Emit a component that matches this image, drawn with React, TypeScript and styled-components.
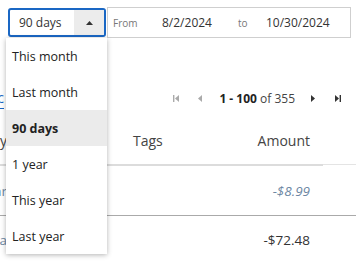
import React from "react";
import styled, { createGlobalStyle } from "styled-components";

const Global = createGlobalStyle`
  html, body { margin: 0; padding: 0; background: #fff; }
  body { font-family: "Open Sans", "Noto Sans", Arial, sans-serif; color: #333; width: 356px; height: 262px; overflow: hidden; }
`;

const Page = styled.div`
  position: relative;
  width: 356px;
  height: 262px;
  overflow: hidden;
`;

const Toolbar = styled.div`
  display: flex;
  align-items: center;
  padding: 7px 5px 0 8px;
`;

const SelectWrap = styled.div`
  position: relative;
  z-index: 2;
`;

const Select = styled.div`
  box-sizing: border-box;
  width: 98px;
  height: 29px;
  border: 2px solid #1a67c4;
  border-radius: 3px;
  display: flex;
  align-items: stretch;
  overflow: hidden;
`;

const SelectLabel = styled.span`
  flex: 1;
  display: flex;
  align-items: center;
  padding-left: 9px;
  font-size: 12px;
  color: #333;
`;

const Caret = styled.span`
  width: 30px;
  background: #ececec;
  display: flex;
  align-items: center;
  justify-content: center;
`;

const Menu = styled.ul`
  position: absolute;
  top: 100%;
  left: -2px;
  width: 101px;
  margin: 1px 0 0;
  padding: 0;
  list-style: none;
  background: #fff;
  box-shadow: 0 1px 5px rgba(0, 0, 0, 0.3);
`;

const MenuItem = styled.li<{ $active?: boolean }>`
  height: 36px;
  display: flex;
  align-items: center;
  padding-left: 6px;
  font-size: 12.5px;
  color: #222;
  font-weight: ${(p) => (p.$active ? 700 : 400)};
  background: ${(p) => (p.$active ? "#ebebeb" : "#fff")};
`;

const DateBox = styled.div`
  box-sizing: border-box;
  flex: 1;
  height: 31px;
  margin-left: 1px;
  border: 1px solid #cfcfcf;
  display: flex;
  align-items: center;
  padding-left: 5px;
`;

const DateLabel = styled.span<{ $w: number }>`
  width: ${(p) => p.$w}px;
  font-size: 10px;
  color: #777;
`;

const DateValue = styled.span<{ $w?: number }>`
  width: ${(p) => (p.$w ? `${p.$w}px` : "auto")};
  font-size: 12px;
  color: #333;
`;

const Pager = styled.div`
  margin-top: 42px;
  height: 36px;
  display: flex;
  align-items: center;
  justify-content: flex-end;
  padding-right: 7px;
`;

const SyncLink = styled.span`
  margin-left: -26px;
  margin-right: auto;
  padding: 1px 0;
  font-size: 14px;
  color: #1a67c4;
  border-bottom: 1px solid #1a67c4;
`;

const PagerButton = styled.span`
  width: 24px;
  display: flex;
  align-items: center;
  justify-content: center;
`;

const PagerText = styled.span`
  font-size: 12px;
  color: #444;
  margin: 0 6px 0 7px;
  b { font-weight: 700; color: #222; }
`;

const Table = styled.div`
  display: grid;
  grid-template-columns: 7px 113px 1fr 96px 33px;
`;

const HeadCell = styled.div<{ $align?: string; $light?: boolean }>`
  height: 48px;
  display: flex;
  align-items: center;
  justify-content: ${(p) => p.$align || "flex-start"};
  overflow: hidden;
  white-space: nowrap;
  font-size: 14px;
  color: #444;
  padding: 0 13px;
  border-bottom: ${(p) => (p.$light ? "1px solid #e4e4e4" : "2px solid #dcdcdc")};
  margin-bottom: ${(p) => (p.$light ? "1px" : "0")};
  &:first-child { padding: 0; justify-content: flex-end; }
`;

const Cell = styled.div<{ $align?: string; $italic?: boolean; $muted?: boolean; $last?: boolean }>`
  height: ${(p) => (p.$last ? "48px" : "49px")};
  display: flex;
  align-items: center;
  justify-content: ${(p) => p.$align || "flex-start"};
  overflow: hidden;
  white-space: nowrap;
  font-size: 13.5px;
  font-style: ${(p) => (p.$italic ? "italic" : "normal")};
  color: ${(p) => (p.$muted ? "#6d87a3" : "#333")};
  padding: 0 13px;
  border-bottom: ${(p) => (p.$last ? "none" : "1px solid #aaa")};
`;

const EdgeCell = styled(Cell)`
  padding: 0;
  justify-content: flex-end;
`;

const Tri = ({ dir, color }: { dir: "up" | "left" | "right"; color: string }) => {
  const pts =
    dir === "up" ? "0,4 3.5,0 7,4" : dir === "left" ? "4,0 4,7 0,3.5" : "0,0 0,7 4,3.5";
  const w = dir === "up" ? 7 : 4;
  const h = dir === "up" ? 4 : 7;
  return (
    <svg width={w} height={h} viewBox={`0 0 ${w} ${h}`}>
      <polygon points={pts} fill={color} />
    </svg>
  );
};

const EdgeIcon = ({ side, color }: { side: "first" | "last"; color: string }) => (
  <svg width="7" height="7" viewBox="0 0 7 7">
    {side === "first" ? (
      <>
        <rect x="0" y="0" width="1.4" height="7" fill={color} />
        <polygon points="6,0 6,7 2,3.5" fill={color} />
      </>
    ) : (
      <>
        <polygon points="1,0 1,7 5,3.5" fill={color} />
        <rect x="5.6" y="0" width="1.4" height="7" fill={color} />
      </>
    )}
  </svg>
);

const options = ["This month", "Last month", "90 days", "1 year", "This year", "Last year"];

export default function App() {
  return (
    <Page>
      <Global />
      <Toolbar>
        <SelectWrap>
          <Select>
            <SelectLabel>90 days</SelectLabel>
            <Caret>
              <Tri dir="up" color="#333" />
            </Caret>
          </Select>
          <Menu>
            {options.map((o) => (
              <MenuItem key={o} $active={o === "90 days"}>
                {o}
              </MenuItem>
            ))}
          </Menu>
        </SelectWrap>
        <DateBox>
          <DateLabel $w={49}>From</DateLabel>
          <DateValue $w={76}>8/2/2024</DateValue>
          <DateLabel $w={28}>to</DateLabel>
          <DateValue>10/30/2024</DateValue>
        </DateBox>
      </Toolbar>
      <Pager>
        <SyncLink>Sync</SyncLink>
        <PagerButton>
          <EdgeIcon side="first" color="#aaa" />
        </PagerButton>
        <PagerButton>
          <Tri dir="left" color="#aaa" />
        </PagerButton>
        <PagerText>
          <b>1 - 100</b> of 355
        </PagerText>
        <PagerButton>
          <Tri dir="right" color="#333" />
        </PagerButton>
        <PagerButton>
          <EdgeIcon side="last" color="#333" />
        </PagerButton>
      </Pager>
      <Table>
        <HeadCell>Category</HeadCell>
        <HeadCell />
        <HeadCell>Tags</HeadCell>
        <HeadCell $align="flex-end">Amount</HeadCell>
        <HeadCell $light />
        <EdgeCell $muted>Streaming, Gear</EdgeCell>
        <Cell />
        <Cell />
        <Cell $align="flex-end" $italic $muted>
          -$8.99
        </Cell>
        <Cell />
        <EdgeCell $last $muted>Groceries, Extra</EdgeCell>
        <Cell $last />
        <Cell $last />
        <Cell $last $align="flex-end">
          -$72.48
        </Cell>
        <Cell $last />
      </Table>
    </Page>
  );
}
